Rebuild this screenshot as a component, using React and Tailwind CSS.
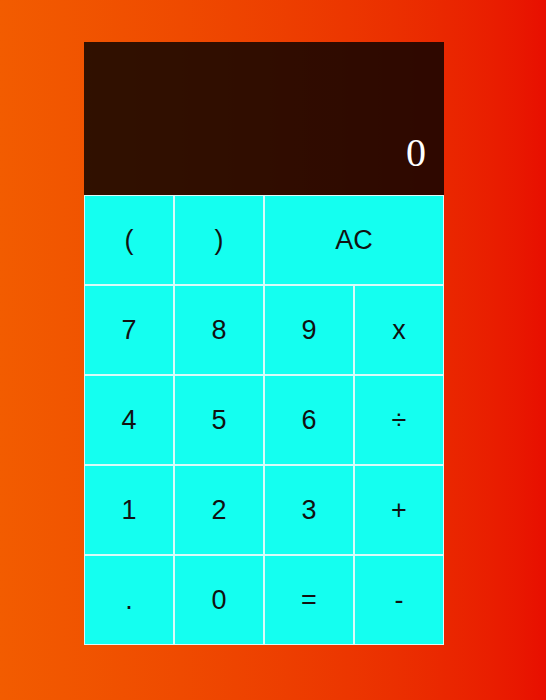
const rows = [
  ["(", ")", "AC"],
  ["7", "8", "9", "x"],
  ["4", "5", "6", "÷"],
  ["1", "2", "3", "+"],
  [".", "0", "=", "-"],
];

function Key({ label, wide }) {
  return (
    <button
      className={`${wide ? "col-span-2" : ""} h-[90px] bg-[#14fff0] border border-[#d9fbf8] text-[27px] text-[#111] flex items-center justify-center`}
      style={{ fontFamily: '"Liberation Sans", Arial, sans-serif' }}
    >
      {label}
    </button>
  );
}

export default function App() {
  return (
    <div className="min-h-screen w-full bg-gradient-to-r from-[#f25c00] to-[#e80e00] pt-[42px] pl-[84px]">
      <div className="w-[360px]">
        <div className="h-[153px] bg-black/80 flex items-end justify-end pr-[18px] pb-[22px]">
          <span
            className="text-white text-[40px] leading-none"
            style={{ fontFamily: '"Liberation Serif", "Times New Roman", serif' }}
          >
            0
          </span>
        </div>
        <div className="grid grid-cols-4">
          {rows.map((row, i) =>
            row.map((k) => <Key key={i + k} label={k} wide={k === "AC"} />)
          )}
        </div>
      </div>
    </div>
  );
}
